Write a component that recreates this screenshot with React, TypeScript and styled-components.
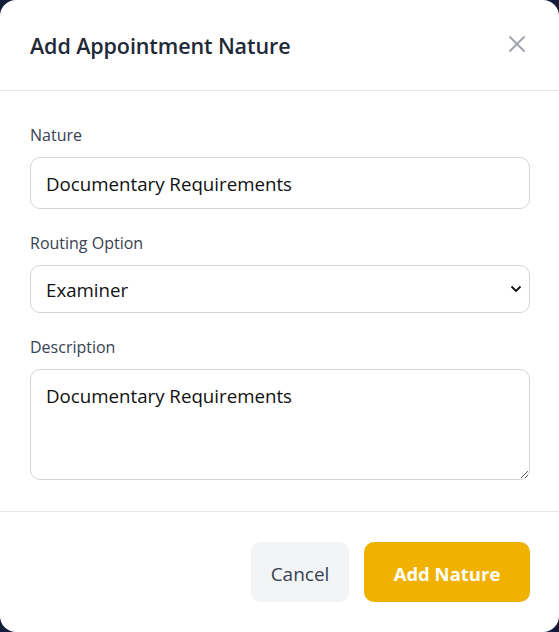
import { createGlobalStyle } from "styled-components";
import styled from "styled-components";

const FONT = `"Open Sans", "Noto Sans", sans-serif`;

const GlobalStyle = createGlobalStyle`
  html, body {
    margin: 0;
    padding: 0;
    background: #131d3b;
  }
  body {
    font-family: ${FONT};
  }
`;

const Modal = styled.div`
  width: 559px;
  height: 632px;
  background: #ffffff;
  border-radius: 16px;
  display: flex;
  flex-direction: column;
  box-sizing: border-box;
  overflow: hidden;
`;

const Header = styled.div`
  display: flex;
  align-items: center;
  justify-content: space-between;
  height: 91px;
  padding: 0 30px;
  border-bottom: 1px solid #e5e7eb;
  box-sizing: border-box;
`;

const Title = styled.h2`
  margin: 0;
  font-size: 21.5px;
  font-weight: 600;
  color: #1f2937;
  letter-spacing: -0.1px;
`;

const CloseButton = styled.button`
  border: none;
  background: none;
  padding: 0;
  width: 24px;
  height: 24px;
  display: flex;
  align-items: center;
  justify-content: center;
  color: #9ca3af;
  cursor: pointer;
  margin-top: -2px;
`;

const Body = styled.div`
  display: flex;
  flex-direction: column;
  gap: 22px;
  padding: 32px 29px 31px 30px;
  border-bottom: 1px solid #e5e7eb;
`;

const Field = styled.div`
  display: flex;
  flex-direction: column;
  gap: 10px;
`;

const Label = styled.label`
  font-size: 16px;
  color: #374151;
  line-height: 24px;
`;

const inputBase = `
  width: 100%;
  box-sizing: border-box;
  border: 1px solid #d1d5db;
  border-radius: 10px;
  font-family: ${FONT};
  font-size: 18.7px;
  color: #111111;
  background: #ffffff;
  padding: 0 15px;
  outline: none;
`;

const TextInput = styled.input`
  ${inputBase}
  height: 52px;
`;

const Select = styled.select`
  ${inputBase}
  height: 48px;
  appearance: none;
  background-image: url("data:image/svg+xml;utf8,<svg xmlns='http://www.w3.org/2000/svg' width='12' height='8' viewBox='0 0 12 8'><path d='M1.5 1.5 L6 6 L10.5 1.5' fill='none' stroke='%23111' stroke-width='1.8'/></svg>");
  background-repeat: no-repeat;
  background-position: right 7px center;
`;

const TextArea = styled.textarea`
  ${inputBase}
  height: 111px;
  padding: 13px 15px;
  resize: vertical;
  line-height: 26px;
`;

const Footer = styled.div`
  display: flex;
  justify-content: flex-end;
  gap: 15px;
  padding: 30px 29px 0 30px;
`;

const Button = styled.button<{ $primary?: boolean }>`
  height: 60px;
  width: ${({ $primary }) => ($primary ? "166px" : "98px")};
  border: none;
  border-radius: 10px;
  font-family: ${FONT};
  font-size: ${({ $primary }) => ($primary ? "18.5px" : "19px")};
  cursor: pointer;
  padding: 3px 0 0;
  background: ${({ $primary }) => ($primary ? "#f0b100" : "#f3f4f6")};
  color: ${({ $primary }) => ($primary ? "#ffffff" : "#374151")};
  font-weight: ${({ $primary }) => ($primary ? 700 : 400)};
`;

export default function App() {
  return (
    <>
      <GlobalStyle />
      <Modal>
        <Header>
          <Title>Add Appointment Nature</Title>
          <CloseButton aria-label="Close">
            <svg width="18" height="18" viewBox="0 0 18 18" fill="none" stroke="currentColor" strokeWidth="1.8" strokeLinecap="round">
              <path d="M2 2 L16 16 M16 2 L2 16" />
            </svg>
          </CloseButton>
        </Header>
        <Body>
          <Field>
            <Label>Nature</Label>
            <TextInput defaultValue="Documentary Requirements" />
          </Field>
          <Field>
            <Label>Routing Option</Label>
            <Select defaultValue="Examiner">
              <option>Examiner</option>
              <option>Supervisor</option>
            </Select>
          </Field>
          <Field>
            <Label>Description</Label>
            <TextArea defaultValue="Documentary Requirements" />
          </Field>
        </Body>
        <Footer>
          <Button>Cancel</Button>
          <Button $primary>Add Nature</Button>
        </Footer>
      </Modal>
    </>
  );
}
